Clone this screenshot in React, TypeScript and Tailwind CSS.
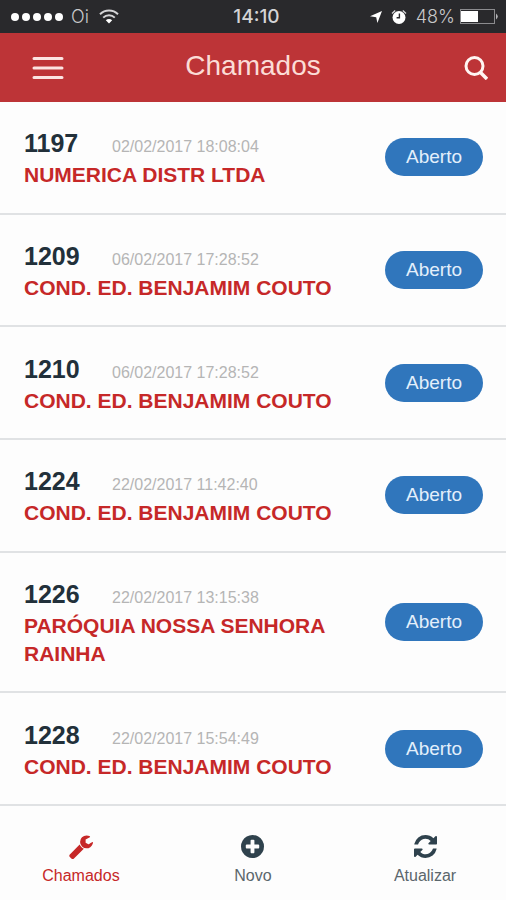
import type { ReactNode } from "react";

type Ticket = {
  id: number;
  date: string;
  customer: string;
  status: string;
};

const tickets: Ticket[] = [
  { id: 1197, date: "02/02/2017 18:08:04", customer: "NUMERICA DISTR LTDA", status: "Aberto" },
  { id: 1209, date: "06/02/2017 17:28:52", customer: "COND. ED. BENJAMIM COUTO", status: "Aberto" },
  { id: 1210, date: "06/02/2017 17:28:52", customer: "COND. ED. BENJAMIM COUTO", status: "Aberto" },
  { id: 1224, date: "22/02/2017 11:42:40", customer: "COND. ED. BENJAMIM COUTO", status: "Aberto" },
  { id: 1226, date: "22/02/2017 13:15:38", customer: "PARÓQUIA NOSSA SENHORA RAINHA", status: "Aberto" },
  { id: 1228, date: "22/02/2017 15:54:49", customer: "COND. ED. BENJAMIM COUTO", status: "Aberto" },
];

function WifiIcon() {
  return (
    <svg viewBox="0 0 20 15" className="h-[15px] w-5" fill="none" stroke="#d4d4d6" strokeWidth="2" aria-hidden="true">
      <path d="M1 5.2a13 13 0 0 1 18 0" />
      <path d="M4.2 8.6a8.4 8.4 0 0 1 11.6 0" />
      <path d="M10 14.4 6.8 11.2a4.6 4.6 0 0 1 6.4 0Z" fill="#fff" stroke="none" />
    </svg>
  );
}

function LocationIcon() {
  return (
    <svg viewBox="0 0 12 12" className="size-3" fill="#fff" aria-hidden="true">
      <path d="M12 0 7.4 12 6.2 6.2 0 5.2Z" />
    </svg>
  );
}

function AlarmIcon() {
  return (
    <svg viewBox="0 0 16 16" className="size-4" fill="none" aria-hidden="true">
      <circle cx="8" cy="8.5" r="6.5" fill="#fff" />
      <path d="M1 4.4 4.2 1.4M15 4.4l-3.2-3" stroke="#d4d4d6" strokeWidth="1.4" />
      <path d="M8.4 4.6v4.2H5.6" stroke="#29292c" strokeWidth="1.4" />
    </svg>
  );
}

function BatteryIcon() {
  return (
    <svg viewBox="0 0 38 16" className="h-4 w-[38px]" aria-hidden="true">
      <rect x="0.5" y="0.5" width="34" height="14" fill="none" stroke="#8b8b8e" />
      <rect x="1" y="2" width="17" height="11" fill="#fff" />
      <path d="M36 4.5q3.500 3 0 6Z" fill="#b5b5b8" />
    </svg>
  );
}

function WrenchIcon() {
  return (
    <svg viewBox="0 0 1664 1792" className="h-[27px] w-6" fill="currentColor" aria-hidden="true">
      <path d="M1028 1052l-682 682q-37 37-90 37-52 0-91-37l-106-108q-38-36-38-90 0-53 38-91l681-681q39 98 114.5 173.5t173.5 114.5zm634-435q0 39-23 106-47 134-164.5 217.5t-258.5 83.5q-185 0-316.5-131.5t-131.5-316.5 131.5-316.5 316.5-131.5q58 0 121.5 16.5t107.5 46.5q16 11 16 28t-16 28l-293 169v224l193 107q5-3 79-48.5t135.5-81 70.5-35.5q15 0 23.5 10t8.5 25z" />
    </svg>
  );
}

function PlusIcon() {
  return (
    <svg viewBox="0 0 1536 1792" className="h-[27px] w-[23px]" fill="currentColor" aria-hidden="true">
      <path d="M1216 960v-128q0-26-19-45t-45-19h-256v-256q0-26-19-45t-45-19h-128q-26 0-45 19t-19 45v256h-256q-26 0-45 19t-19 45v128q0 26 19 45t45 19h256v256q0 26 19 45t45 19h128q26 0 45-19t19-45v-256h256q26 0 45-19t19-45zm320-64q0 209-103 385.5t-279.5 279.5-385.5 103-385.5-103-279.5-279.5-103-385.5 103-385.5 279.5-279.5 385.5-103 385.5 103 279.5 279.5 103 385.5z" />
    </svg>
  );
}

function RefreshIcon() {
  return (
    <svg viewBox="0 0 1536 1792" className="h-[27px] w-[23px]" fill="currentColor" aria-hidden="true">
      <path d="M1511 1056q0 5-1 7-64 268-268 434.5t-478 166.5q-146 0-282.5-55t-243.5-157l-129 129q-19 19-45 19t-45-19-19-45v-448q0-26 19-45t45-19h448q26 0 45 19t19 45-19 45l-137 137q71 66 161 102t187 36q134 0 250-65t186-179q11-17 53-117 8-23 30-23h192q13 0 22.5 9.5t9.5 22.5zm25-800v448q0 26-19 45t-45 19h-448q-26 0-45-19t-19-45 19-45l138-138q-148-137-349-137-134 0-250 65t-186 179q-11 17-53 117-8 23-30 23h-199q-13 0-22.5-9.5t-9.5-22.5v-7q65-268 270-434.5t480-166.5q146 0 284 55.5t245 156.5l130-129q19-19 45-19t45 19 19 45z" />
    </svg>
  );
}

function StatusBar() {
  return (
    <div className="grid h-[33px] grid-cols-[1fr_auto_1fr] items-center bg-[#29292c] pr-2 pl-[11px] font-['Inter',sans-serif] text-lg leading-6 text-[#c8c8ca]">
      <div className="flex items-center gap-2">
        <div className="flex gap-[3px]">
          {[0, 1, 2, 3, 4].map((dot) => (
            <span key={dot} className="size-2 rounded-full bg-white" />
          ))}
        </div>
        <span className="font-light">Oi</span>
        <span className="pl-0.5">
          <WifiIcon />
        </span>
      </div>
      <span className="pl-1 text-[19px] font-medium text-[#d4d4d6]">14:10</span>
      <div className="flex items-center justify-end gap-[5px]">
        <LocationIcon />
        <span className="px-1">
          <AlarmIcon />
        </span>
        <span className="font-light">48%</span>
        <BatteryIcon />
      </div>
    </div>
  );
}

function Header() {
  return (
    <header className="grid h-[69px] grid-cols-[1fr_auto_1fr] items-center bg-[#bd3437] px-[18px] text-[#fbdcd6]">
      <button type="button" aria-label="Menu" className="justify-self-start px-3.5 py-2">
        <svg viewBox="0 0 32 24" className="h-6 w-8" stroke="#fce4e2" strokeWidth="3" strokeLinecap="round" aria-hidden="true">
          <path d="M2 2.5h28M2 12h28M2 21.5h28" />
        </svg>
      </button>
      <h1 className="pb-1 text-[28px] leading-9">Chamados</h1>
      <button type="button" aria-label="Buscar" className="justify-self-end">
        <svg viewBox="0 0 24 24" className="size-6" fill="none" stroke="#fff5f3" strokeWidth="3" aria-hidden="true">
          <circle cx="10.5" cy="10" r="8.5" />
          <path d="m16.5 16.5 6.5 6.5" strokeWidth="3.5" />
        </svg>
      </button>
    </header>
  );
}

function TicketRow({ ticket }: { ticket: Ticket }) {
  return (
    <li className="flex grow items-center justify-between gap-4 border-b-2 border-[#e0e2e4] pr-[23px] pl-6">
      <div className="flex min-w-0 flex-1 flex-col gap-0.5 pt-[25px] pb-[23px]">
        <div className="grid grid-cols-[88px_1fr] items-baseline">
          <span className="text-[25px] leading-8 font-bold text-[#22303a]">{ticket.id}</span>
          <time className="text-base leading-5 text-[#b5b5b5]">{ticket.date}</time>
        </div>
        <p className="text-[21px] leading-7 font-bold text-[#c62828]">{ticket.customer}</p>
      </div>
      <span className="rounded-full bg-[#3076bc] px-[21px] py-[7px] text-[19px] leading-6 text-[#e3effb]">
        {ticket.status}
      </span>
    </li>
  );
}

function NavItem({ label, active, children }: { label: string; active?: boolean; children: ReactNode }) {
  return (
    <a
      href="#"
      aria-current={active ? "page" : undefined}
      className={active ? "flex flex-col items-center gap-1.5 text-[#c62828]" : "flex flex-col items-center gap-1.5 text-[#2f424d]"}
    >
      {children}
      <span className={active ? "text-base leading-5" : "text-base leading-5 text-[#5b666c]"}>{label}</span>
    </a>
  );
}

export default function App() {
  return (
    <div className="flex min-h-screen flex-col bg-[#fdfdfd] font-['Liberation_Sans',Arial,sans-serif]">
      <StatusBar />
      <Header />
      <ul className="flex grow flex-col">
        {tickets.map((ticket) => (
          <TicketRow key={ticket.id} ticket={ticket} />
        ))}
      </ul>
      <nav className="grid grid-cols-[32%_36%_32%] pt-[27px] pb-3.5">
        <NavItem label="Chamados" active>
          <WrenchIcon />
        </NavItem>
        <NavItem label="Novo">
          <PlusIcon />
        </NavItem>
        <NavItem label="Atualizar">
          <RefreshIcon />
        </NavItem>
      </nav>
    </div>
  );
}
